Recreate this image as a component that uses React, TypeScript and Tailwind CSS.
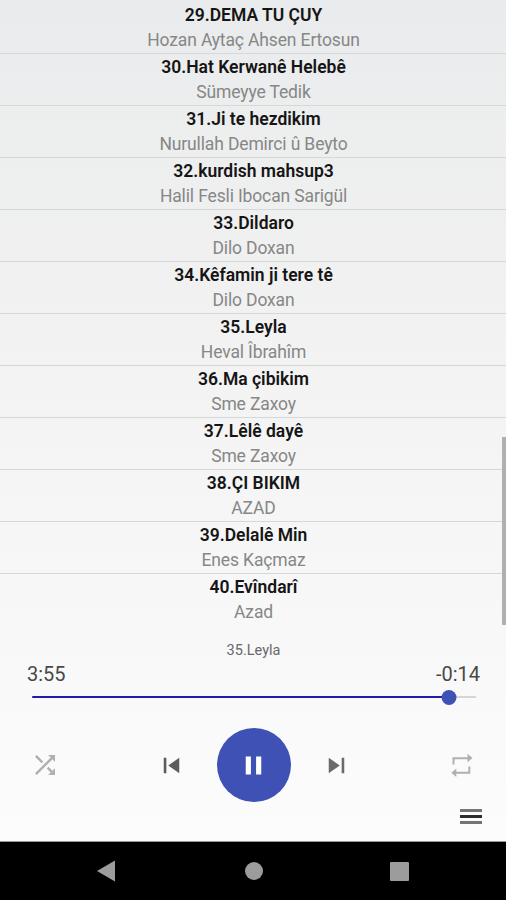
import { useState } from "react";
import { MdPause, MdShuffle, MdSkipNext, MdSkipPrevious } from "react-icons/md";

interface Song {
  title: string;
  artist: string;
}

const FIRST_TRACK = 29;

const songs: Song[] = [
  { title: "DEMA TU ÇUY", artist: "Hozan Aytaç Ahsen Ertosun" },
  { title: "Hat Kerwanê Helebê", artist: "Sümeyye Tedik" },
  { title: "Ji te hezdikim", artist: "Nurullah Demirci û Beyto" },
  { title: "kurdish mahsup3", artist: "Halil Fesli Ibocan Sarigül" },
  { title: "Dildaro", artist: "Dilo Doxan" },
  { title: "Kêfamin ji tere tê", artist: "Dilo Doxan" },
  { title: "Leyla", artist: "Heval Îbrahîm" },
  { title: "Ma çibikim", artist: "Sme Zaxoy" },
  { title: "Lêlê dayê", artist: "Sme Zaxoy" },
  { title: "ÇI BIKIM", artist: "AZAD" },
  { title: "Delalê Min", artist: "Enes Kaçmaz" },
  { title: "Evîndarî", artist: "Azad" },
];

const RepeatIcon = () => (
  <svg width="24" height="24" viewBox="0 0 24 24" fill="#b0b0b0">
    <path d="M2.500 4.200h15V.7l5 4.300-5 4.300V6.200h-13v5.300h-2z" />
    <path d="M20.300 20.800h-14v3.200l-5-4.200 5-4.200v3.200h12v-5.300h2z" />
  </svg>
);

const SongList = ({ onSelect }: { onSelect: (index: number) => void }) => (
  <ul className="pt-[2px]">
    {songs.map((song, i) => (
      <li
        key={i}
        onClick={() => onSelect(i)}
        className="h-[52px] border-b border-[#d6d7d7] pl-[1px] text-center last:border-transparent"
      >
        <div className="h-[26px] text-[17.5px] leading-[26px] font-semibold text-[#151515]">
          {FIRST_TRACK + i}.{song.title}
        </div>
        <div className="h-[25px] text-[17.5px] leading-[24px] tracking-[-0.14px] text-[#868787]">
          {song.artist}
        </div>
      </li>
    ))}
  </ul>
);

const ProgressBar = ({ value }: { value: number }) => (
  <div className="relative mx-8 flex h-4 w-[444px] items-center">
    <div className="h-[2px] w-full bg-[#d6d6d8]" />
    <div
      className="absolute left-0 h-[2px] rounded-full bg-[#1c1fa8]"
      style={{ width: `${value}%` }}
    />
    <div
      className="absolute size-[15px] -translate-x-1/2 rounded-full bg-[#3f51b5]"
      style={{ left: `${value}%` }}
    />
  </div>
);

const NavigationBar = () => (
  <nav className="flex h-[58px] items-center bg-black pl-[96px]">
    <svg width="20" height="22" viewBox="0 0 20 22" fill="#9c9c9c">
      <path d="M1 11 19 .5v21z" />
    </svg>
    <div className="ml-[129px] size-[18px] rounded-full bg-[#9c9c9c]" />
    <div className="ml-[127px] size-[19px] rounded-[1px] bg-[#9c9c9c]" />
  </nav>
);

const App = () => {
  const [current, setCurrent] = useState(6);

  return (
    <div className="flex h-[900px] w-[506px] flex-col overflow-hidden bg-black font-[Roboto,sans-serif]">
      <main className="h-[842px] border-b border-[#999999] bg-linear-to-b from-[#eaebec] via-[#f4f4f4] to-[#fdfcfd]">
        <div className="relative h-[626px]">
          <SongList onSelect={setCurrent} />
          <div className="absolute top-[437px] right-0 h-[188px] w-[4.5px] bg-[#b0b0b1]" />
        </div>

        {/* Player */}
        <div className="pt-[15px]">
          <p className="h-5 pl-[1px] text-center text-[14.5px] leading-5 text-[#686868]">
            {FIRST_TRACK + current}.{songs[current].title}
          </p>
          <div className="flex h-[28px] items-center justify-between pr-[26px] pb-[3px] pl-[27px] text-[20px] text-[#484848]">
            <span>3:55</span>
            <span>-0:14</span>
          </div>
          <ProgressBar value={94} />
          <div className="mt-[22px] flex h-[76px] items-center pl-[30px]">
            <button>
              <MdShuffle size={30} color="#b0b0b0" />
            </button>
            <button className="ml-[95.5px]">
              <MdSkipPrevious size={31} color="#5c5c5c" />
            </button>
            <button className="ml-[30px] flex size-[74px] items-center justify-center rounded-full bg-[#3f51b5]">
              <MdPause size={31} color="#ffffff" />
            </button>
            <button className="ml-[30.5px]">
              <MdSkipNext size={31} color="#6a6a6a" />
            </button>
            <button className="ml-[98px]">
              <RepeatIcon />
            </button>
          </div>
          <div className="flex justify-end pt-[6px] pr-6">
            <button className="flex flex-col gap-[3px]">
              <span className="h-[3px] w-[22px] bg-[#747474]" />
              <span className="h-[3px] w-[22px] bg-[#2c2c2c]" />
              <span className="h-[3px] w-[22px] bg-[#747474]" />
            </button>
          </div>
        </div>
      </main>
      <NavigationBar />
    </div>
  );
};

export default App;
